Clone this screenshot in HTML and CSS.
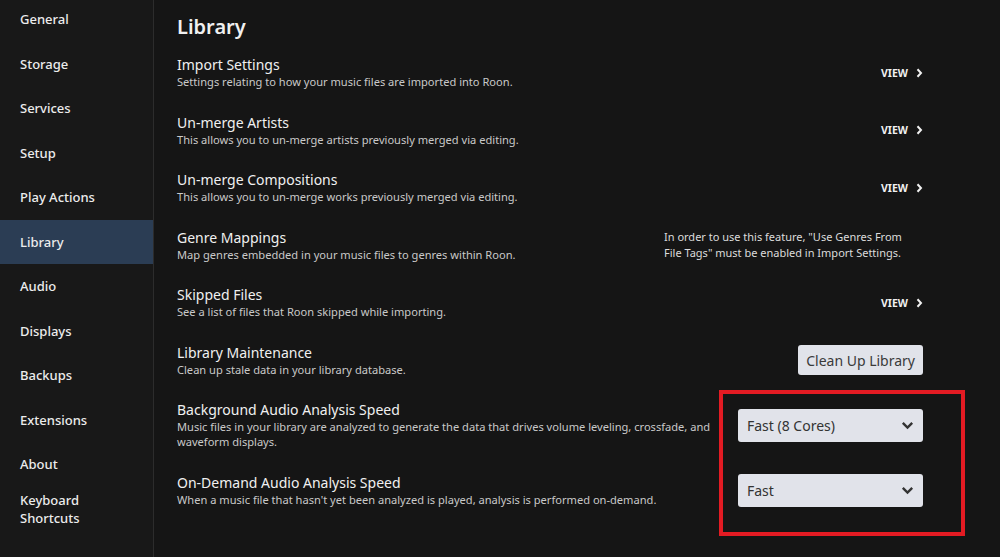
FILE: index.html
```html
<!DOCTYPE html>
<html lang="en">
  <head>
    <meta charset="UTF-8" />
    <title>Settings - Library</title>
    <link rel="stylesheet" href="styles.css">
  </head>
  <body>
    <nav class="sidebar">
      <ul class="nav-list">
        <li class="nav-item">General</li>
        <li class="nav-item">Storage</li>
        <li class="nav-item">Services</li>
        <li class="nav-item">Setup</li>
        <li class="nav-item">Play Actions</li>
        <li class="nav-item active">Library</li>
        <li class="nav-item">Audio</li>
        <li class="nav-item">Displays</li>
        <li class="nav-item">Backups</li>
        <li class="nav-item">Extensions</li>
        <li class="nav-item">About</li>
        <li class="nav-item">Keyboard<br>Shortcuts</li>
      </ul>
    </nav>

    <main class="content">
      <h1>Library</h1>

      <div class="setting">
        <div class="setting-text">
          <div class="setting-title">Import Settings</div>
          <div class="setting-desc">Settings relating to how your music files are imported into Roon.</div>
        </div>
        <a class="view-link">VIEW
          <svg width="7" height="10" viewBox="0 0 7 10"><path d="M1.5 1.2 5 5 1.5 8.8" fill="none" stroke="#f0f0f0" stroke-width="2"/></svg>
        </a>
      </div>

      <div class="setting">
        <div class="setting-text">
          <div class="setting-title">Un-merge Artists</div>
          <div class="setting-desc">This allows you to un-merge artists previously merged via editing.</div>
        </div>
        <a class="view-link">VIEW
          <svg width="7" height="10" viewBox="0 0 7 10"><path d="M1.5 1.2 5 5 1.5 8.8" fill="none" stroke="#f0f0f0" stroke-width="2"/></svg>
        </a>
      </div>

      <div class="setting">
        <div class="setting-text">
          <div class="setting-title">Un-merge Compositions</div>
          <div class="setting-desc">This allows you to un-merge works previously merged via editing.</div>
        </div>
        <a class="view-link">VIEW
          <svg width="7" height="10" viewBox="0 0 7 10"><path d="M1.5 1.2 5 5 1.5 8.8" fill="none" stroke="#f0f0f0" stroke-width="2"/></svg>
        </a>
      </div>

      <div class="setting">
        <div class="setting-text">
          <div class="setting-title">Genre Mappings</div>
          <div class="setting-desc">Map genres embedded in your music files to genres within Roon.</div>
        </div>
        <p class="setting-note">In order to use this feature, "Use Genres From File Tags" must be enabled in Import Settings.</p>
      </div>

      <div class="setting">
        <div class="setting-text">
          <div class="setting-title">Skipped Files</div>
          <div class="setting-desc">See a list of files that Roon skipped while importing.</div>
        </div>
        <a class="view-link">VIEW
          <svg width="7" height="10" viewBox="0 0 7 10"><path d="M1.5 1.2 5 5 1.5 8.8" fill="none" stroke="#f0f0f0" stroke-width="2"/></svg>
        </a>
      </div>

      <div class="setting">
        <div class="setting-text">
          <div class="setting-title">Library Maintenance</div>
          <div class="setting-desc">Clean up stale data in your library database.</div>
        </div>
        <button type="button" class="light-button">Clean Up Library</button>
      </div>

      <div class="setting">
        <div class="setting-text">
          <div class="setting-title">Background Audio Analysis Speed</div>
          <div class="setting-desc">Music files in your library are analyzed to generate the data that drives volume leveling, crossfade, and waveform displays.</div>
        </div>
        <div class="dropdown">
          <span>Fast (8 Cores)</span>
          <svg width="13" height="9" viewBox="0 0 13 9"><path d="M1.8 1.8 6.5 6.5 11.2 1.8" fill="none" stroke="#333" stroke-width="2.4"/></svg>
        </div>
      </div>

      <div class="setting">
        <div class="setting-text">
          <div class="setting-title">On-Demand Audio Analysis Speed</div>
          <div class="setting-desc">When a music file that hasn't yet been analyzed is played, analysis is performed on-demand.</div>
        </div>
        <div class="dropdown">
          <span>Fast</span>
          <svg width="13" height="9" viewBox="0 0 13 9"><path d="M1.8 1.8 6.5 6.5 11.2 1.8" fill="none" stroke="#333" stroke-width="2.4"/></svg>
        </div>
      </div>
    </main>

    <div class="highlight"></div>
  </body>
</html>
```

FILE: styles.css
```css
:root {
  --bg-color: #151515;
  --sidebar-color: #181818;
  --border-color: #2c2c2c;
  --active-color: #2b3d54;
  --text-color: #f0f0f0;
  --muted-color: #c9c9c9;
  --control-bg: #e1e3ea;
  --control-text: #333;
  --mark-color: #e31b23;
}

* {
  box-sizing: border-box;
}

html,
body {
  height: 100%;
}

body {
  font-family: "Noto Sans", "Open Sans", sans-serif;
  background-color: var(--bg-color);
  color: var(--text-color);
  margin: 0;
  display: flex;
  overflow: hidden;
}

.sidebar {
  width: 154px;
  flex-shrink: 0;
  background-color: var(--sidebar-color);
  border-right: 1px solid var(--border-color);
}

.nav-list {
  list-style: none;
  margin: -3px 0 0;
  padding: 0;
}

.nav-item {
  min-height: 44.5px;
  display: flex;
  align-items: center;
  padding: 0 20px;
  font-size: 13px;
  font-weight: 500;
  line-height: 18px;
  color: #ececec;
}

.nav-item.active {
  background-color: var(--active-color);
}

.content {
  flex: 1;
  padding: 13px 77px 0 23px;
}

h1 {
  margin: 0 0 3px;
  font-size: 20px;
  font-weight: 600;
  line-height: 28px;
}

.setting {
  display: flex;
  align-items: center;
  gap: 20px;
  padding: 12.25px 0;
}

.setting-text {
  flex: 1;
}

.setting-title {
  font-size: 14px;
  line-height: 18px;
}

.setting-desc {
  font-size: 11.1px;
  line-height: 15px;
  color: var(--muted-color);
}

.view-link {
  display: flex;
  align-items: center;
  gap: 8px;
  font-size: 10.5px;
  font-weight: 700;
  color: var(--text-color);
  cursor: pointer;
}

.setting-note {
  width: 259px;
  margin: 0;
  padding-right: 14px;
  font-size: 11px;
  line-height: 16px;
  color: #dcdcdc;
}

.light-button {
  font-family: inherit;
  font-size: 14px;
  color: #3a3a3a;
  background-color: var(--control-bg);
  border: none;
  border-radius: 3px;
  height: 30px;
  padding: 0 8px;
  cursor: pointer;
}

.dropdown {
  width: 185px;
  height: 33px;
  display: flex;
  align-items: center;
  justify-content: space-between;
  padding: 0 9px;
  font-size: 14px;
  color: var(--control-text);
  background-color: var(--control-bg);
  border-radius: 3px;
}

/* red annotation frame drawn over the two dropdowns */
.highlight {
  position: absolute;
  left: 719px;
  top: 390px;
  width: 246px;
  height: 146px;
  border: 4px solid var(--mark-color);
  pointer-events: none;
}
```
